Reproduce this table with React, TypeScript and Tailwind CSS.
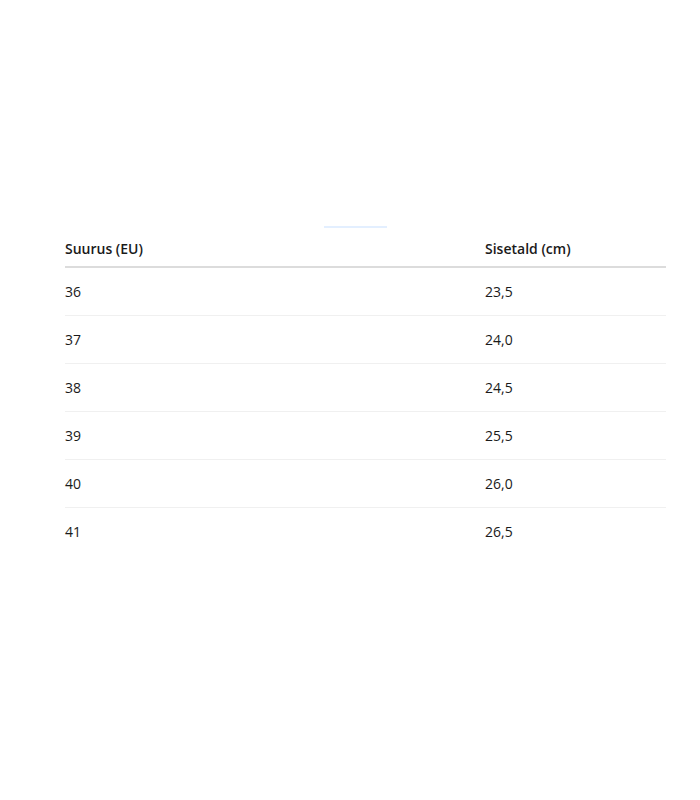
const rows = [
  { size: "36", length: "23,5" },
  { size: "37", length: "24,0" },
  { size: "38", length: "24,5" },
  { size: "39", length: "25,5" },
  { size: "40", length: "26,0" },
  { size: "41", length: "26,5" },
];

export default function App() {
  return (
    <div className="min-h-[800px] bg-white pt-[226px] pl-[65px] font-['Open_Sans',sans-serif] text-[14px] text-[#1a1a1a]">
      <div className="w-[601px]">
        <div className="ml-[259px] h-[2px] w-[63px] bg-[#e3efff]" />
        <table className="mt-[4px] w-full border-collapse text-left">
          <thead>
            <tr className="border-b-2 border-[#dcdcdc]">
              <th className="w-[420px] pt-[5px] pb-[5px] font-semibold leading-6">Suurus (EU)</th>
              <th className="pt-[5px] pb-[5px] font-semibold leading-6">Sisetald (cm)</th>
            </tr>
          </thead>
          <tbody>
            {rows.map((r, i) => (
              <tr
                key={r.size}
                className={i < rows.length - 1 ? "border-b border-[#f0f0f0]" : ""}
              >
                <td className="py-[11px] leading-[25px]">{r.size}</td>
                <td className="py-[11px] leading-[25px]">{r.length}</td>
              </tr>
            ))}
          </tbody>
        </table>
      </div>
    </div>
  );
}
